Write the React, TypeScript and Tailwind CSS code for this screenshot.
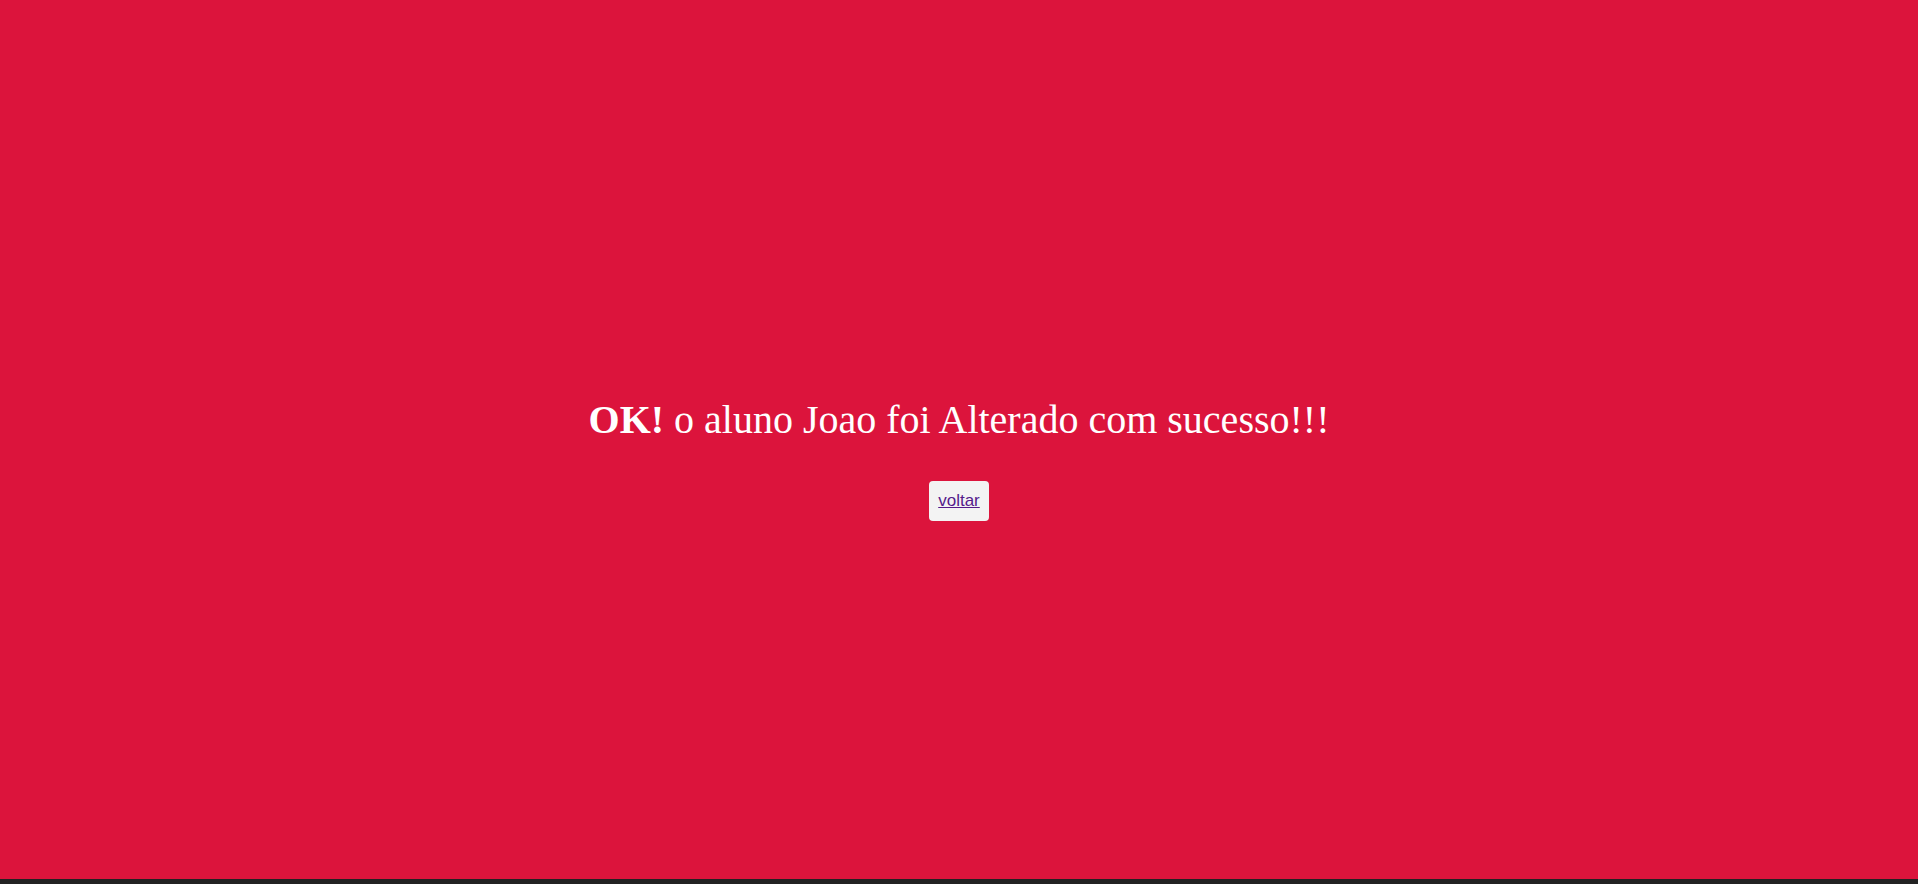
import React from "react";

export default function App() {
  return (
    <div className="w-full h-[884px] flex flex-col overflow-hidden">
      <div className="h-[879px] bg-[#dc143c] flex flex-col items-center pt-[397px]">
        <h1
          className="text-[40px] leading-[46px] text-white font-normal m-0"
          style={{ fontFamily: '"Liberation Serif", "Times New Roman", serif' }}
        >
          <b className="font-bold">OK!</b> o aluno Joao foi Alterado com sucesso!!!
        </h1>
        <div
          className="mt-[38px] bg-[#f3f3f3] rounded-[4px] px-[9px] py-[10px] text-[17px] leading-[20px]"
          style={{ fontFamily: '"Liberation Sans", Arial, sans-serif' }}
        >
          <a href="#" className="text-[#551a8b] underline">
            voltar
          </a>
        </div>
      </div>
      <div className="h-[5px] bg-[#222222]" />
    </div>
  );
}
